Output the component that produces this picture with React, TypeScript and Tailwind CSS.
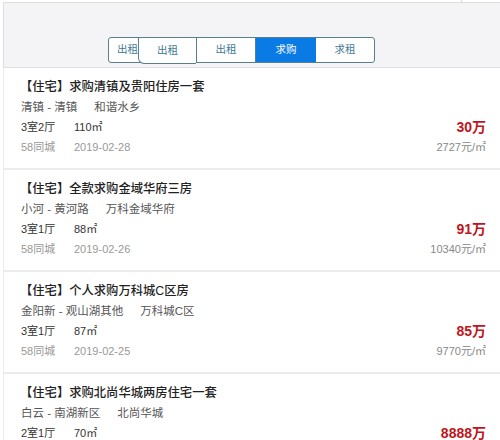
import React from 'react'

interface Listing {
  title: string
  area: string
  estate: string
  rooms: string
  size: string
  source: string
  date: string
  price: string
  unit: string
}

const listings: Listing[] = [
  {
    title: '【住宅】求购清镇及贵阳住房一套',
    area: '清镇 - 清镇',
    estate: '和谐水乡',
    rooms: '3室2厅',
    size: '110㎡',
    source: '58同城',
    date: '2019-02-28',
    price: '30万',
    unit: '2727元/㎡',
  },
  {
    title: '【住宅】全款求购金域华府三房',
    area: '小河 - 黄河路',
    estate: '万科金域华府',
    rooms: '3室1厅',
    size: '88㎡',
    source: '58同城',
    date: '2019-02-26',
    price: '91万',
    unit: '10340元/㎡',
  },
  {
    title: '【住宅】个人求购万科城C区房',
    area: '金阳新 - 观山湖其他',
    estate: '万科城C区',
    rooms: '3室1厅',
    size: '87㎡',
    source: '58同城',
    date: '2019-02-25',
    price: '85万',
    unit: '9770元/㎡',
  },
  {
    title: '【住宅】求购北尚华城两房住宅一套',
    area: '白云 - 南湖新区',
    estate: '北尚华城',
    rooms: '2室1厅',
    size: '70㎡',
    source: '58同城',
    date: '2019-02-22',
    price: '8888万',
    unit: '1269714元/㎡',
  },
]

const font = "font-['Liberation_Sans','Noto_Sans_CJK_SC',sans-serif]"

function Tabs() {
  return (
    <div className="flex h-[26px] w-[267px] rounded-[3px] border border-[#58808a] bg-white text-[10.5px] text-[#3f7896]">
      <div className="flex w-[88px] border-r border-[#58808a]">
        <span className="flex w-[29px] items-center justify-end">出租</span>
        <span className="-mb-[2px] flex flex-1 items-center justify-center rounded-bl-[6px] border-b border-l border-[#58808a] bg-white">
          出租
        </span>
      </div>
      <span className="flex w-[59px] items-center justify-center border-r border-[#58808a]">
        出租
      </span>
      <span className="flex w-[60px] items-center justify-center bg-[#0a7ae4] text-white">
        求购
      </span>
      <span className="flex flex-1 items-center justify-center">求租</span>
    </div>
  )
}

function ListingCard({ item }: { item: Listing }) {
  return (
    <div className="h-[100px] pl-[17px] pr-[14px] pt-[9px]">
      <div className="-ml-px h-5 text-[12.3px] font-medium leading-5 text-[#222]">
        {item.title}
      </div>
      <div className="flex h-5 items-center text-[11.5px] leading-5 text-[#555]">
        <span>{item.area}</span>
        <span className="ml-[17px]">{item.estate}</span>
      </div>
      <div className="flex h-5 items-center text-[11px] leading-5 text-[#333]">
        <span className="w-[53px]">{item.rooms}</span>
        <span>{item.size}</span>
        <span className="ml-auto text-[14px] font-bold text-[#bf1520]">
          {item.price}
        </span>
      </div>
      <div className="flex h-5 items-center text-[11px] leading-5 text-[#999]">
        <span className="w-[53px]">{item.source}</span>
        <span>{item.date}</span>
        <span className="ml-auto text-[#888]">{item.unit}</span>
      </div>
    </div>
  )
}

export default function App() {
  return (
    <div className={`h-[440px] w-[500px] overflow-hidden bg-white ${font}`}>
      <div className="flex h-[2px]">
        <div className="w-[462px] border-r border-[#d8d8d8]" />
      </div>
      <div className="ml-[3px] h-[66px] border-b border-l border-t border-[#dedede] bg-[#f4f4f6] pl-[104px] pt-[34px]">
        <Tabs />
      </div>
      <div className="ml-[3px] border-l border-[#ececec]">
        {listings.map((item) => (
          <div key={item.title}>
            <ListingCard item={item} />
            <div className="h-[2px] bg-[#ececec]" />
          </div>
        ))}
      </div>
    </div>
  )
}
